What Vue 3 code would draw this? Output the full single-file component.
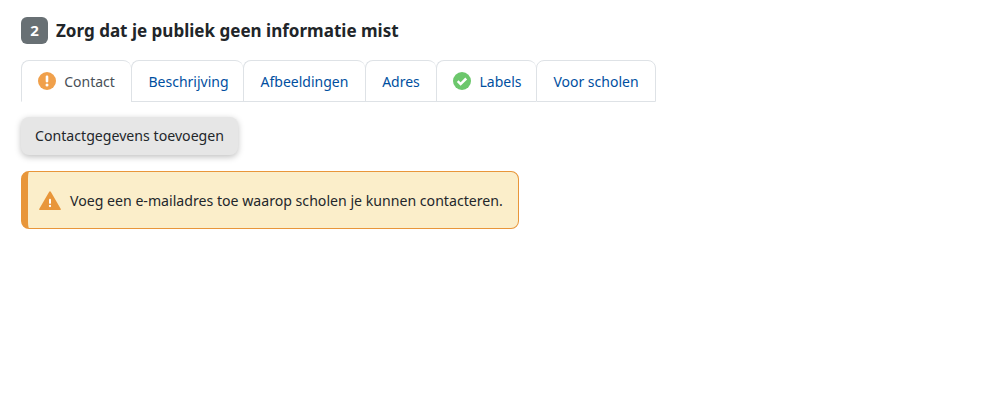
<script setup>
const tabs = [
  { label: 'Contact', icon: 'warn', active: true, width: 110 },
  { label: 'Beschrijving', width: 112, nudge: true },
  { label: 'Afbeeldingen', width: 122 },
  { label: 'Adres', width: 71 },
  { label: 'Labels', icon: 'ok', width: 100, nudge: true },
  { label: 'Voor scholen', width: 120 },
]
</script>

<template>
  <div class="page">
    <h2 class="heading"><span class="badge">2</span>Zorg dat je publiek geen informatie mist</h2>
    <ul class="tabs">
      <li v-for="t in tabs" :key="t.label" class="tab" :class="{ active: t.active, nudge: t.nudge }" :style="{ width: t.width + 'px' }">
        <svg v-if="t.icon === 'warn'" class="tab-icon" viewBox="0 0 18 18">
          <circle cx="9" cy="9" r="9" fill="#f0a04b" />
          <rect x="7.7" y="3.6" width="2.6" height="6.8" rx="1.1" fill="#fff" />
          <circle cx="9" cy="13" r="1.5" fill="#fff" />
        </svg>
        <svg v-if="t.icon === 'ok'" class="tab-icon" viewBox="0 0 18 18">
          <circle cx="9" cy="9" r="9" fill="#6cc76c" />
          <path d="M4.7 9.2l2.9 2.9 5.6-5.6" fill="none" stroke="#fff" stroke-width="2.5" />
        </svg>
        <span>{{ t.label }}</span>
      </li>
    </ul>
    <button class="add">Contactgegevens toevoegen</button>
    <div class="alert">
      <svg class="alert-icon" viewBox="0 0 22 19">
        <path d="M11 0.2c.3 0 .6.2.8.5l10 17.2c.3.5 0 1.1-.6 1.1H.8c-.6 0-.9-.6-.6-1.1L10.2.7c.2-.3.5-.5.8-.5z" fill="#e8963a" />
        <rect x="10" y="7.8" width="2" height="5" rx="0.9" fill="#fff" />
        <circle cx="11" cy="15" r="1.15" fill="#fff" />
      </svg>
      <span class="alert-text">Voeg een e-mailadres toe waarop scholen je kunnen contacteren.</span>
    </div>
  </div>
</template>

<style>
html, body { margin: 0; background: #fff; }
</style>

<style scoped>
.page {
  box-sizing: border-box;
  width: 1006px;
  height: 418px;
  padding: 17px 21px 0;
  font-family: "Noto Sans", sans-serif;
  font-size: 14px;
  color: #23272b;
}
.heading {
  display: flex;
  align-items: center;
  gap: 8px;
  margin: 0 0 16px;
  font-size: 17.05px;
  font-weight: 700;
  line-height: 27px;
  color: #212529;
}
.badge {
  width: 27px;
  height: 27px;
  border-radius: 6px;
  background: #687074;
  color: #fff;
  font-size: 15px;
  text-align: center;
}
.tabs {
  display: flex;
  margin: 0 0 15px;
  padding: 0;
  list-style: none;
}
.tab {
  box-sizing: border-box;
  display: flex;
  align-items: center;
  justify-content: center;
  gap: 8px;
  height: 42px;
  border: 1px solid #dee2e6;
  border-right: 0;
  border-radius: 8px 8px 0 0;
  color: #004f9f;
}
.tab.nudge { padding-left: 2px; }
.tab:last-child { border-right: 1px solid #dee2e6; }
.tab.active {
  border-bottom-color: #fff;
  color: #495057;
}
.tab-icon { width: 18px; height: 18px; flex: none; }
.add {
  display: block;
  box-sizing: border-box;
  width: 217px;
  height: 38px;
  padding: 0 0 2px;
  border: 0;
  border-radius: 8px;
  background: #e6e6e6;
  color: #23272b;
  font: inherit;
  font-size: 14.15px;
  box-shadow: 0 2px 6px rgba(0, 0, 0, 0.25);
}
.alert {
  box-sizing: border-box;
  display: flex;
  align-items: center;
  gap: 9px;
  width: 498px;
  height: 58px;
  margin-top: 16px;
  padding-left: 11px;
  background: #fbeeca;
  border: 1px solid #e8963a;
  border-left-width: 7px;
  border-radius: 8px;
}
.alert-text { font-size: 14.13px; }
.alert-icon { width: 22px; height: 19px; flex: none; }
</style>
